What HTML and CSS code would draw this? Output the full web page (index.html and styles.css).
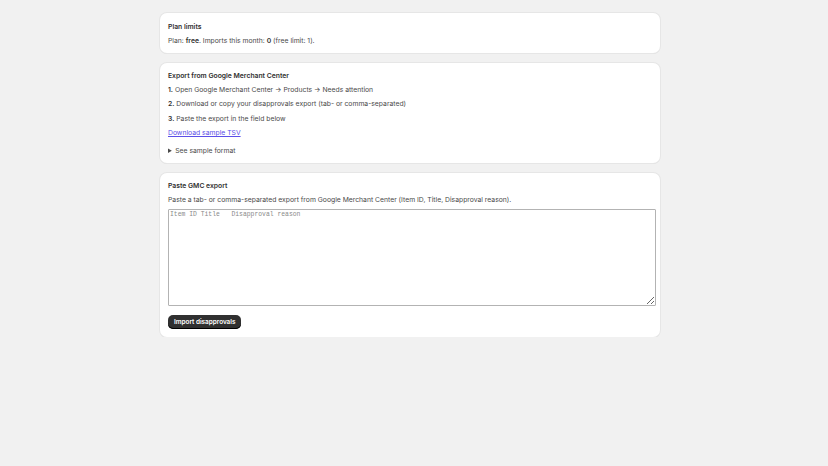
FILE: index.html
```html
<!DOCTYPE html>
<html lang="en">
<head>
    <meta charset="UTF-8">
    <meta name="viewport" content="width=device-width, initial-scale=1.0">
    <title>GMC disapprovals import</title>
    <link rel="stylesheet" href="styles.css">
</head>
<body>
<div class="page">
    <section class="card">
        <h2>Plan limits</h2>
        <p>Plan: <strong>free</strong>. Imports this month: <strong>0</strong> (free limit: 1).</p>
    </section>

    <section class="card">
        <h2>Export from Google Merchant Center</h2>
        <p><strong>1.</strong> Open Google Merchant Center → Products → Needs attention</p>
        <p><strong>2.</strong> Download or copy your disapprovals export (tab- or comma-separated)</p>
        <p><strong>3.</strong> Paste the export in the field below</p>
        <p><a href="#">Download sample TSV</a></p>
        <details>
            <summary>See sample format</summary>
            <pre>Item ID	Title	Disapproval reason</pre>
        </details>
    </section>

    <section class="card">
        <h2>Paste GMC export</h2>
        <p>Paste a tab- or comma-separated export from Google Merchant Center (Item ID, Title, Disapproval reason).</p>
        <textarea id="gmcExport" placeholder="Item ID	Title	Disapproval reason"></textarea>
        <button type="button">Import disapprovals</button>
    </section>
</div>
</body>
</html>
```

FILE: styles.css
```css
body {
    margin: 0;
    padding: 13px 8px 0 0;
    background-color: #f1f1f1;
    font-family: Inter, "Noto Sans", sans-serif;
    font-size: 6.8px;
    line-height: 9px;
    color: #4a4a4a;
}
.page {
    max-width: 500px;
    margin: 0 auto;
    display: flex;
    flex-direction: column;
    gap: 9.5px;
}
.card {
    background-color: #fff;
    border-radius: 7px;
    padding: 8.5px 8.5px 8.5px 8px;
    box-shadow: 0 0 0 1px #e6e6e6, 0 1px 0 #d9d9d9;
    display: flex;
    flex-direction: column;
    align-items: flex-start;
    gap: 5px;
}
h2 {
    margin: 0;
    font-size: 6.8px;
    font-weight: 600;
    color: #303030;
}
p {
    margin: 0;
}
.card p:nth-of-type(3), .card p:nth-of-type(4) {
    margin-top: 0.5px;
}
strong {
    font-weight: 600;
    color: #303030;
}
a {
    color: #5b4fe8;
}
details {
    margin-top: 3.5px;
}
summary {
    cursor: pointer;
}
pre {
    font-family: "Liberation Mono", monospace;
    font-size: 6.4px;
}
textarea {
    width: 100%;
    height: 93px;
    padding: 1px 1px;
    border: 1px solid #b3b3b3;
    border-radius: 1px;
    font-family: "Liberation Mono", monospace;
    font-size: 6.4px;
    line-height: 8px;
    color: #303030;
}
textarea::placeholder {
    color: #8a8a8a;
}
button {
    margin-top: 4px;
    height: 13.5px;
    padding: 0 6px;
    border: none;
    border-radius: 5px;
    background-color: #303030;
    color: #fff;
    font-family: Inter, "Noto Sans", sans-serif;
    font-size: 6.4px;
    font-weight: 600;
    box-shadow: inset 0 -1px 0 #000;
}
```
